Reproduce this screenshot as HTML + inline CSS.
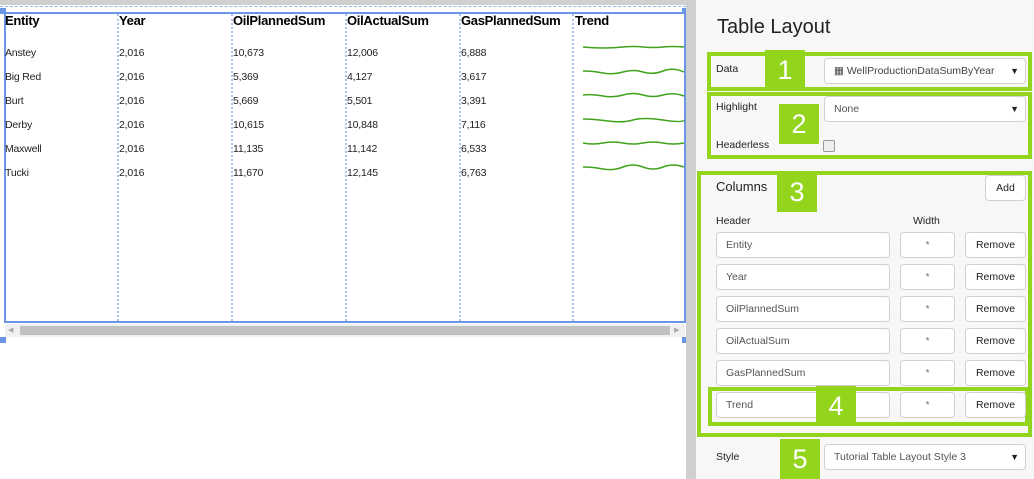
<!DOCTYPE html>
<html><head><meta charset="utf-8"><style>
*{box-sizing:border-box;margin:0;padding:0}
body{width:1034px;height:479px;position:relative;overflow:hidden;background:#fff;font-family:"Liberation Sans",sans-serif;}
.a{position:absolute}
.top{left:0;top:0;width:690px;height:5px;background:#d0d0d0}
.dash{left:0;top:6px;width:686px;border-top:1px dashed #9bb8ee}
.tbl{left:4px;top:12px;width:682px;height:311px;border:2px solid #6b96e6}
.vd{top:14px;height:307px;border-left:2px dotted #a9c2f0;width:0}
.h{top:13px;font-size:13px;font-weight:bold;color:#000;letter-spacing:-0.3px}
.c{font-size:10.5px;color:#222;letter-spacing:-0.2px}
.sb{left:5px;top:324px;width:680px;height:13px;background:#f0f0f0}
.thumb{left:20px;top:326px;width:650px;height:9px;background:#c1c1c1}
.hd{width:6px;height:6px;background:#6b96e6}
.strip{left:686px;top:0;width:10px;height:479px;background:#cfcfcf}
.panel{left:696px;top:0;width:338px;height:479px;background:#f7f7f7}
.g{border:4px solid #93d41c}
.n{background:#93d41c;color:#fff;font-size:27px;text-align:center;line-height:40px;width:40px;height:40px}
.lbl{font-size:10.5px;color:#222}
.in{background:#fff;border:1px solid #d0d0d0;border-radius:4px;height:26px;font-size:10.5px;color:#555;line-height:24px;padding-left:9px}
.btn{background:#fff;border:1px solid #d0d0d0;border-radius:4px;height:26px;font-size:10.5px;color:#222;line-height:24px;text-align:center}
.arr{position:absolute;right:6px;top:0;font-size:9px;color:#222}
</style></head><body>
<div class="a top"></div>
<div class="a dash"></div>
<div class="a tbl"></div>
<div class="a hd" style="left:0;top:8px"></div>
<div class="a hd" style="left:682px;top:8px"></div>
<div class="a hd" style="left:0;top:337px"></div>
<div class="a hd" style="left:682px;top:337px"></div>
<div class="a vd" style="left:117px"></div>
<div class="a vd" style="left:231px"></div>
<div class="a vd" style="left:345px"></div>
<div class="a vd" style="left:459px"></div>
<div class="a vd" style="left:572px"></div>
<div class="a h" style="left:5px">Entity</div>
<div class="a h" style="left:119px">Year</div>
<div class="a h" style="left:233px">OilPlannedSum</div>
<div class="a h" style="left:347px">OilActualSum</div>
<div class="a h" style="left:461px">GasPlannedSum</div>
<div class="a h" style="left:575px">Trend</div>

<div class="a c" style="left:5px;top:41px;line-height:24px">Anstey<br>Big Red<br>Burt<br>Derby<br>Maxwell<br>Tucki</div>
<div class="a c" style="left:119px;top:41px;line-height:24px">2,016<br>2,016<br>2,016<br>2,016<br>2,016<br>2,016</div>
<div class="a c" style="left:233px;top:41px;line-height:24px">10,673<br>5,369<br>5,669<br>10,615<br>11,135<br>11,670</div>
<div class="a c" style="left:347px;top:41px;line-height:24px">12,006<br>4,127<br>5,501<br>10,848<br>11,142<br>12,145</div>
<div class="a c" style="left:461px;top:41px;line-height:24px">6,888<br>3,617<br>3,391<br>7,116<br>6,533<br>6,763</div>
<svg class="a" style="left:583px;top:40px" width="102" height="140" fill="none" stroke="#3fa31c" stroke-width="1.5">
<path d="M0 7 Q10 8 20 8 T40 7 T60 7 T80 7 T101 7"/>
<path d="M0 31 Q10 31 20 33 T40 32 T60 32 T80 31 T101 32"/>
<path d="M0 55 Q10 54 20 56 T40 55 T60 55 T80 55 T101 56"/>
<path d="M0 79 Q10 79 25 81 T50 80 T80 80 T101 80"/>
<path d="M0 103 Q10 105 20 103 T40 103 T60 103 T80 103 T101 103"/>
<path d="M0 127 Q10 127 20 129 T40 127 T60 127 T80 127 T101 127"/>
</svg>
<div class="a sb"></div>
<div class="a thumb"></div>
<div class="a" style="left:8px;top:326px;font-size:7px;color:#aaa">◀</div>
<div class="a" style="left:674px;top:326px;font-size:7px;color:#aaa">▶</div>

<div class="a strip"></div>
<div class="a panel"></div>
<div class="a" style="left:717px;top:16px;font-size:20px;color:#222">Table Layout</div>

<div class="a g" style="left:707px;top:52px;width:325px;height:39px"></div>
<div class="a lbl" style="left:716px;top:63px">Data</div>
<div class="a in" style="left:824px;top:58px;width:202px;color:#444">▦ WellProductionDataSumByYear<span class="arr">▼</span></div>
<div class="a n" style="left:765px;top:50px">1</div>

<div class="a g" style="left:707px;top:92px;width:325px;height:67px"></div>
<div class="a lbl" style="left:716px;top:101px">Highlight</div>
<div class="a lbl" style="left:716px;top:139px">Headerless</div>
<div class="a in" style="left:824px;top:96px;width:202px">None<span class="arr">▼</span></div>
<div class="a" style="left:823px;top:140px;width:12px;height:12px;border:1px solid #999;border-radius:2px;background:#eee"></div>
<div class="a n" style="left:779px;top:104px">2</div>

<div class="a g" style="left:697px;top:171px;width:335px;height:266px"></div>
<div class="a" style="left:716px;top:179px;font-size:13px;color:#222">Columns</div>
<div class="a btn" style="left:985px;top:175px;width:41px">Add</div>
<div class="a n" style="left:777px;top:172px">3</div>
<div class="a lbl" style="left:716px;top:215px">Header</div>
<div class="a lbl" style="left:913px;top:215px">Width</div>

<div class="a in" style="left:716px;top:232px;width:174px">Entity</div><div class="a btn" style="left:900px;top:232px;width:55px;color:#777">*</div><div class="a btn" style="left:965px;top:232px;width:61px">Remove</div>
<div class="a in" style="left:716px;top:264px;width:174px">Year</div><div class="a btn" style="left:900px;top:264px;width:55px;color:#777">*</div><div class="a btn" style="left:965px;top:264px;width:61px">Remove</div>
<div class="a in" style="left:716px;top:296px;width:174px">OilPlannedSum</div><div class="a btn" style="left:900px;top:296px;width:55px;color:#777">*</div><div class="a btn" style="left:965px;top:296px;width:61px">Remove</div>
<div class="a in" style="left:716px;top:328px;width:174px">OilActualSum</div><div class="a btn" style="left:900px;top:328px;width:55px;color:#777">*</div><div class="a btn" style="left:965px;top:328px;width:61px">Remove</div>
<div class="a in" style="left:716px;top:360px;width:174px">GasPlannedSum</div><div class="a btn" style="left:900px;top:360px;width:55px;color:#777">*</div><div class="a btn" style="left:965px;top:360px;width:61px">Remove</div>
<div class="a g" style="left:708px;top:387px;width:321px;height:39px"></div>
<div class="a in" style="left:716px;top:392px;width:174px">Trend</div><div class="a btn" style="left:900px;top:392px;width:55px;color:#777">*</div><div class="a btn" style="left:965px;top:392px;width:61px">Remove</div>
<div class="a n" style="left:816px;top:386px">4</div>

<div class="a lbl" style="left:716px;top:451px">Style</div>
<div class="a in" style="left:824px;top:444px;width:202px">Tutorial Table Layout Style 3<span class="arr">▼</span></div>
<div class="a n" style="left:780px;top:439px;height:40px">5</div>
</body></html>
